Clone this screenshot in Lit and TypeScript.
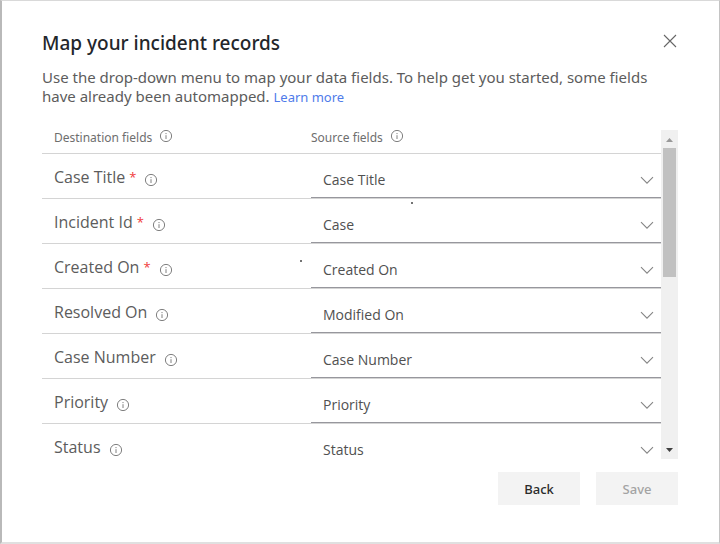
import { LitElement, html, css, svg, nothing } from "lit";
import { customElement, property } from "lit/decorators.js";
import { classMap } from "lit/directives/class-map.js";

interface FieldMapping {
  destination: string;
  source: string;
  required?: boolean;
  speck?: "source" | "destination";
}

const MAPPINGS: FieldMapping[] = [
  { destination: "Case Title", source: "Case Title", required: true },
  { destination: "Incident Id", source: "Case", required: true, speck: "source" },
  { destination: "Created On", source: "Created On", required: true, speck: "destination" },
  { destination: "Resolved On", source: "Modified On" },
  { destination: "Case Number", source: "Case Number" },
  { destination: "Priority", source: "Priority" },
  { destination: "Status", source: "Status" },
];

const SOURCES = MAPPINGS.map((m) => m.source);

@customElement("info-icon")
export class InfoIcon extends LitElement {
  static styles = css`
    :host {
      display: inline-flex;
      flex: none;
      width: 14px;
      height: 14px;
      color: #808080;
    }
  `;
  render() {
    return html`<svg width="14" height="14" viewBox="0 0 14 14" aria-hidden="true">
      ${svg`<circle cx="7" cy="7" r="5.6" fill="none" stroke="currentColor" stroke-width="1"/>
      <path d="M7 6.2V10M7 4v1.1" stroke="currentColor" stroke-width="1" fill="none"/>`}
    </svg>`;
  }
}

@customElement("source-select")
export class SourceSelect extends LitElement {
  @property() value = "";
  @property() label = "";

  static styles = css`
    :host {
      display: block;
      position: relative;
    }
    .select {
      display: block;
      width: 100%;
      height: 36px;
      padding: 0 40px 0 12px;
      border: 0;
      border-bottom: 1px solid #97979d;
      border-radius: 0;
      background: transparent;
      appearance: none;
      color: #505050;
      font: 14px/20px "Open Sans", "Noto Sans", sans-serif;
    }
    .chevron {
      position: absolute;
      right: 7px;
      top: 14px;
      pointer-events: none;
    }
  `;
  render() {
    return html`<select class="select" aria-label=${this.label}>
        ${SOURCES.map(
          (s) => html`<option ?selected=${s === this.value}>${s}</option>`
        )}
      </select>
      <svg class="chevron" width="14" height="9" viewBox="0 0 14 9" aria-hidden="true">
        <path d="M1 1.2L7 7.2L13 1.2" fill="none" stroke="#858585" stroke-width="1.1" />
      </svg>`;
  }
}

@customElement("app-root")
export class AppRoot extends LitElement {
  static styles = css`
    :host {
      display: block;
      font-family: "Noto Sans", "Open Sans", sans-serif;
      color: #5c5c5c;
    }
    .dialog {
      box-sizing: border-box;
      height: 100vh;
      display: flex;
      flex-direction: column;
      padding: 29px 41px 37px 40px;
      border-style: solid;
      border-width: 1px 1px 2px 2px;
      border-color: #d9d9d9 #c4c4c4 #e0e0e0 #b9b9b9;
      background: #fff;
    }
    .head {
      display: flex;
      justify-content: space-between;
      align-items: flex-start;
    }
    .title {
      margin: 0;
      font-size: 19px;
      line-height: 26px;
      font-weight: 500;
      color: #23262b;
    }
    .close {
      display: flex;
      padding: 4px 1px;
      border: 0;
      background: none;
    }
    .intro {
      margin: 12px 0 23px;
      font-size: 15px;
      line-height: 19px;
    }
    .link {
      font-size: 13px;
      color: #4f7bea;
      text-decoration: none;
    }
    .pane {
      flex: 1;
      min-height: 0;
      display: flex;
    }
    .view {
      flex: 1;
      overflow: hidden;
    }
    .table {
      width: 100%;
      table-layout: fixed;
      border-collapse: separate;
      border-spacing: 0;
    }
    .dest {
      width: 269px;
    }
    .cell {
      padding: 0;
      border-bottom: 1px solid #d4d4d4;
      text-align: left;
      font-weight: 400;
      vertical-align: top;
      position: relative;
    }
    .caption {
      display: flex;
      align-items: center;
      gap: 7px;
      height: 16px;
      padding-bottom: 7px;
      font-size: 12px;
      line-height: 16px;
      color: #6e6e6e;
    }
    .inset {
      padding-left: 12px;
    }
    .caption info-icon {
      margin-bottom: 4px;
    }
    .row {
      height: 45px;
    }
    .name {
      display: flex;
      gap: 4px;
      padding: 11px 0 0 12px;
      font-family: "Open Sans", "Noto Sans", sans-serif;
      font-size: 16px;
      line-height: 24px;
    }
    .star {
      font-size: 13px;
      color: #f03a3a;
    }
    .name info-icon {
      margin: 8px 0 0 4px;
    }
    .field {
      padding-top: 8px;
    }
    .speck::after {
      content: "";
      position: absolute;
      width: 2px;
      height: 2px;
      border-radius: 1px;
      background: #444;
    }
    .speck-source::after {
      left: 100px;
      top: 3px;
    }
    .speck-destination::after {
      right: 9px;
      top: 16px;
    }
    .bar {
      flex: none;
      display: flex;
      flex-direction: column;
      align-items: center;
      width: 17px;
      background: #f0f0f0;
    }
    .arrow {
      flex: none;
      display: block;
    }
    .track {
      flex: 1;
      width: 13px;
    }
    .thumb {
      height: 44%;
      background: #c1c1c1;
    }
    .actions {
      display: flex;
      justify-content: flex-end;
      gap: 16px;
      margin-top: 13px;
    }
    .button {
      width: 82px;
      height: 33px;
      padding: 0;
      border: 0;
      background: #f3f3f3;
      font: 500 13px/20px "Noto Sans", "Open Sans", sans-serif;
      color: #2b2b2b;
    }
    .button:disabled {
      color: #a3a3a3;
    }
  `;

  private renderRow(m: FieldMapping) {
    return html`<tr class="row">
      <th
        scope="row"
        class=${classMap({
          cell: true,
          speck: m.speck === "destination",
          "speck-destination": m.speck === "destination",
        })}
      >
        <div class="name">
          <span>${m.destination}</span>
          ${m.required ? html`<span class="star">*</span>` : nothing}
          <info-icon></info-icon>
        </div>
      </th>
      <td
        class=${classMap({
          cell: true,
          field: true,
          speck: m.speck === "source",
          "speck-source": m.speck === "source",
        })}
      >
        <source-select .value=${m.source} .label=${m.destination}></source-select>
      </td>
    </tr>`;
  }

  render() {
    return html`<main class="dialog">
      <header class="head">
        <h1 class="title">Map your incident records</h1>
        <button class="close" aria-label="Close">
          <svg width="14" height="14" viewBox="0 0 14 14" aria-hidden="true">
            <path d="M1 1L13 13M13 1L1 13" stroke="#666" stroke-width="1.1" />
          </svg>
        </button>
      </header>
      <p class="intro">
        Use the drop-down menu to map your data fields. To help get you started, some fields
        have already been automapped. <a class="link" href="#">Learn more</a>
      </p>
      <section class="pane">
        <div class="view">
          <table class="table">
            <thead>
              <tr>
                <th scope="col" class="cell dest">
                  <div class="caption inset">Destination fields <info-icon></info-icon></div>
                </th>
                <th scope="col" class="cell">
                  <div class="caption">Source fields <info-icon></info-icon></div>
                </th>
              </tr>
            </thead>
            <tbody>
              ${MAPPINGS.map((m) => this.renderRow(m))}
            </tbody>
          </table>
        </div>
        <div class="bar" aria-hidden="true">
          <svg class="arrow" width="17" height="18" viewBox="0 0 17 18">
            <path d="M5 12L8.5 8L12 12Z" fill="#999" />
          </svg>
          <div class="track"><div class="thumb"></div></div>
          <svg class="arrow" width="17" height="18" viewBox="0 0 17 18">
            <path d="M5 7L8.5 11L12 7Z" fill="#404040" />
          </svg>
        </div>
      </section>
      <footer class="actions">
        <button class="button">Back</button>
        <button class="button" disabled>Save</button>
      </footer>
    </main>`;
  }
}
